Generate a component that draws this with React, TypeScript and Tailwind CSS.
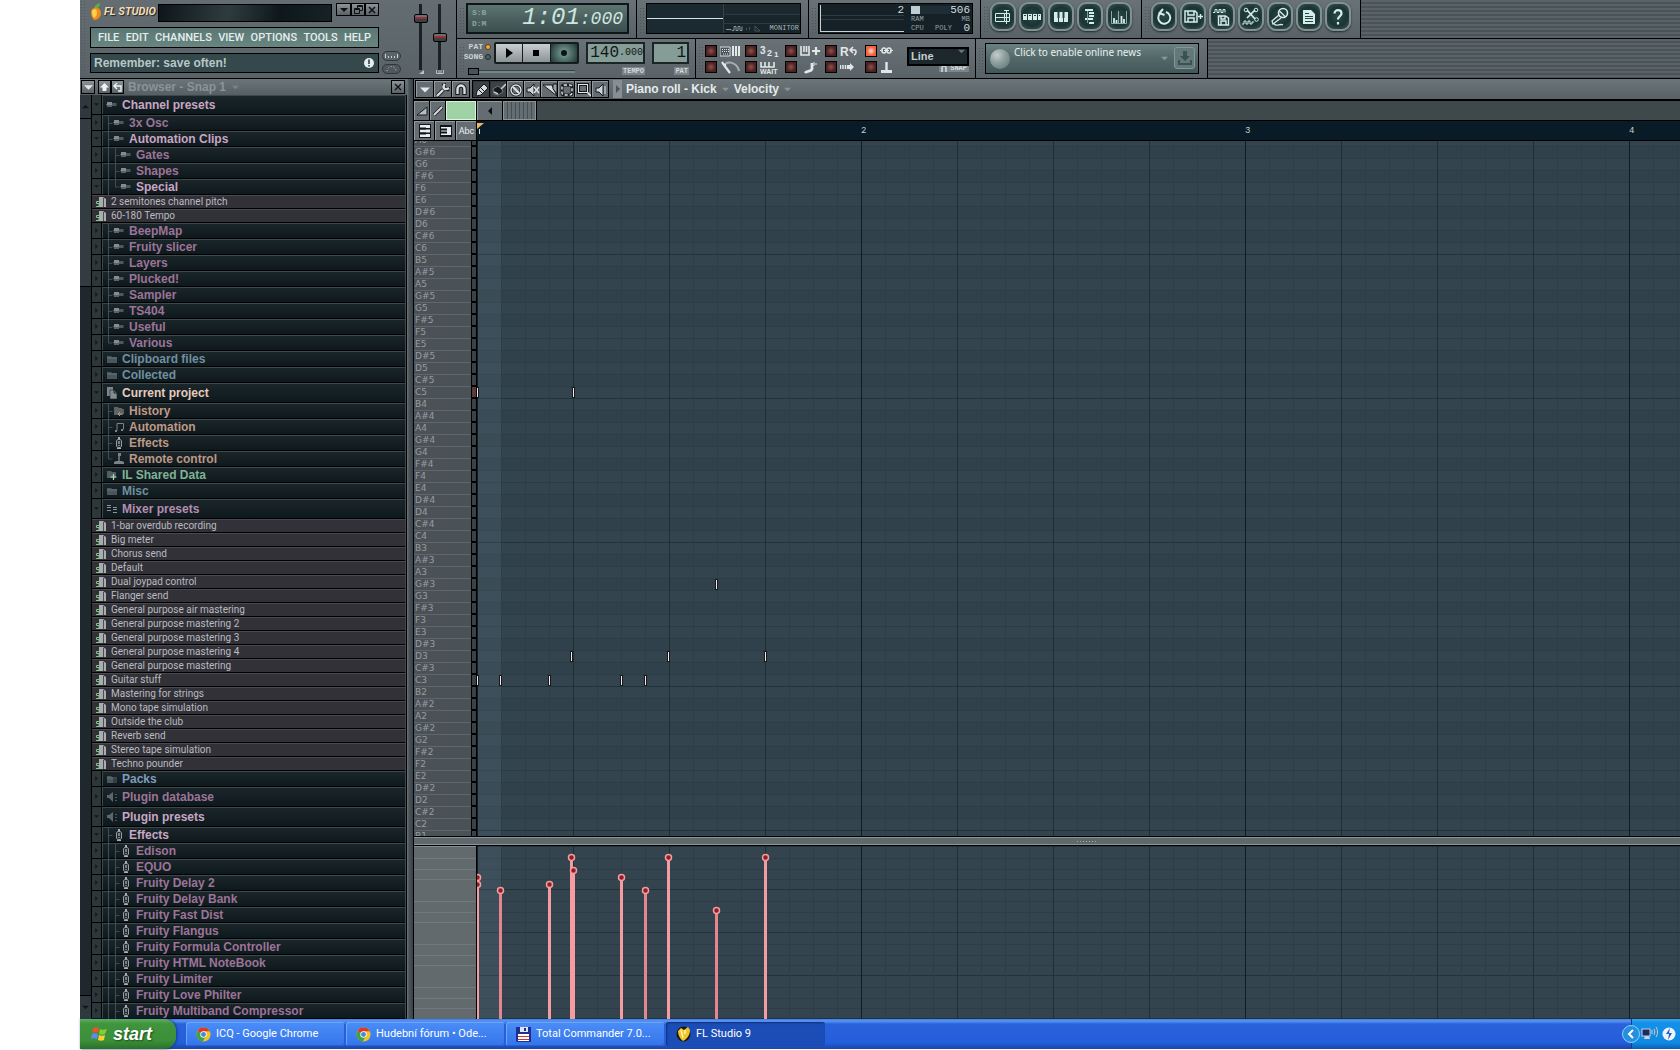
import React from "react";

const SANS = "font-['Liberation_Sans',Arial,sans-serif]";
const NOTO = "font-['Noto_Sans','Open_Sans',sans-serif]";
const ROBOTO = "font-['Roboto','Liberation_Sans',sans-serif]";
const MONO = "font-['Liberation_Mono',monospace]";

/* ---------- browser tree ---------- */
type Kind = "plug" | "folder" | "pages" | "history" | "notes" | "fx" | "joy" | "shared" | "mixer" | "packs" | "db" | "file";
type Row = { t: string; d: number; k: Kind; c: string; open?: boolean; tall?: boolean; last?: boolean };

const MAUVE = "text-[#9c7497]";
const MAUVE_HI = "text-[#c9a6c3]";
const BLUE = "text-[#6f909f]";
const SALMON = "text-[#bf9887]";

const file = (t: string): Row => ({ t, d: 0, k: "file", c: "text-[#b9bcc0]" });
const plug = (t: string, d = 1, last = false): Row => ({ t, d, k: "plug", c: MAUVE, last });
const fx = (t: string): Row => ({ t, d: 2, k: "fx", c: MAUVE });

const ROWS: Row[] = [
  { t: "Channel presets", d: 0, k: "plug", c: MAUVE_HI, open: true, tall: true },
  plug("3x Osc"),
  { t: "Automation Clips", d: 1, k: "plug", c: MAUVE_HI, open: true },
  plug("Gates", 2),
  plug("Shapes", 2),
  { t: "Special", d: 2, k: "plug", c: MAUVE_HI, open: true, last: true },
  file("2 semitones channel pitch"),
  file("60-180 Tempo"),
  plug("BeepMap"),
  plug("Fruity slicer"),
  plug("Layers"),
  plug("Plucked!"),
  plug("Sampler"),
  plug("TS404"),
  plug("Useful"),
  plug("Various", 1, true),
  { t: "Clipboard files", d: 0, k: "folder", c: BLUE },
  { t: "Collected", d: 0, k: "folder", c: BLUE },
  { t: "Current project", d: 0, k: "pages", c: "text-[#e6cbbd]", open: true, tall: true },
  { t: "History", d: 1, k: "history", c: SALMON },
  { t: "Automation", d: 1, k: "notes", c: SALMON },
  { t: "Effects", d: 1, k: "fx", c: SALMON },
  { t: "Remote control", d: 1, k: "joy", c: SALMON, last: true },
  { t: "IL Shared Data", d: 0, k: "shared", c: "text-[#7fb297]" },
  { t: "Misc", d: 0, k: "folder", c: BLUE },
  { t: "Mixer presets", d: 0, k: "mixer", c: "text-[#b58daf]", open: true, tall: true },
  file("1-bar overdub recording"),
  file("Big meter"),
  file("Chorus send"),
  file("Default"),
  file("Dual joypad control"),
  file("Flanger send"),
  file("General purpose air mastering"),
  file("General purpose mastering 2"),
  file("General purpose mastering 3"),
  file("General purpose mastering 4"),
  file("General purpose mastering"),
  file("Guitar stuff"),
  file("Mastering for strings"),
  file("Mono tape simulation"),
  file("Outside the club"),
  file("Reverb send"),
  file("Stereo tape simulation"),
  file("Techno pounder"),
  { t: "Packs", d: 0, k: "packs", c: "text-[#7f9dbb]" },
  { t: "Plugin database", d: 0, k: "db", c: MAUVE, tall: true },
  { t: "Plugin presets", d: 0, k: "db", c: MAUVE_HI, open: true, tall: true },
  { t: "Effects", d: 1, k: "fx", c: MAUVE_HI, open: true },
  fx("Edison"),
  fx("EQUO"),
  fx("Fruity Delay 2"),
  fx("Fruity Delay Bank"),
  fx("Fruity Fast Dist"),
  fx("Fruity Flangus"),
  fx("Fruity Formula Controller"),
  fx("Fruity HTML NoteBook"),
  fx("Fruity Limiter"),
  fx("Fruity Love Philter"),
  fx("Fruity Multiband Compressor"),
];

function TreeIcon({ k }: { k: Kind }) {
  return (
    <svg width="12" height="12" viewBox="0 0 12 12" className="shrink-0" fill="none">
      {k === "plug" && (
        <>
          <rect x="1" y="3" width="5" height="5" fill="#858b8e" />
          <rect x="1" y="6" width="5" height="2" fill="#5c6468" />
          <rect x="6" y="4" width="4" height="3" fill="#4e575b" />
          <rect x="10" y="4" width="1" height="3" fill="#333c40" />
          <rect x="0" y="5" width="1" height="1" fill="#5a6266" />
        </>
      )}
      {(k === "folder" || k === "packs") && (
        <>
          <path d="M1 3h4l1 1h5v6H1z" fill="#4a565c" />
          <path d="M1 5h10" stroke="#66737a" />
          {k === "packs" && <path d="M8 1v9M10 2v8" stroke="#1b262b" />}
        </>
      )}
      {k === "pages" && (
        <>
          <path d="M1 0h6v9H1z" fill="#7d8589" />
          <path d="M4 3h4l3 3v6H4z" fill="#858d91" stroke="#1a2428" strokeWidth=".6" />
          <path d="M8 3v3h3" stroke="#1a2428" />
        </>
      )}
      {k === "history" && (
        <>
          <path d="M1 2h4l1 1h3v7H1z" fill="#5c6468" />
          <path d="M10 4v5H5M7 7L5 9l2 2" stroke="#b09a90" />
        </>
      )}
      {k === "notes" && (
        <>
          <path d="M4 9.500V2.500h6.500v6" stroke="#7b8386" />
          <path d="M2 9h2v2H2zM8 8h2v2H8z" fill="#7b8386" />
        </>
      )}
      {k === "fx" && (
        <>
          <path d="M5 0h2v2H5zM4 11h4v1H4z" fill="#a9aeb0" />
          <path d="M3.500 4l1-1.500h3l1 1.500v5l-1 1.500h-3l-1-1.500z" fill="#222c30" stroke="#979da0" />
          <path d="M6 4v3M6 8v1" stroke="#d0d3d4" />
        </>
      )}
      {k === "joy" && (
        <>
          <path d="M6 1v7" stroke="#7b8386" strokeWidth="1.500" />
          <rect x="5" y="0" width="3" height="3" fill="#7b8386" />
          <path d="M3 8h6l2 1v2H1V9z" fill="#7b8386" />
        </>
      )}
      {k === "shared" && (
        <>
          <path d="M1 2h4l1 1h4v6H1z" fill="#4d6059" />
          <path d="M7.500 5v6M4.500 8h6" stroke="#b7d8c6" strokeWidth="1.200" />
        </>
      )}
      {k === "mixer" && <path d="M1 2.500h4M1 4.500h4M1 7.500h4M7 4.500h4M7 6.500h4M7 9.500h4" stroke="#8d9498" />}
      {k === "db" && (
        <>
          <path d="M7 1L3 4H1v3h2l4 4z" fill="#5d666a" />
          <path d="M10 3v1M10 6v1M10 9v1" stroke="#8d9498" />
        </>
      )}
      {k === "file" && (
        <>
          <path d="M4 1h4l3 2v8H4z" fill="#a9adb0" />
          <path d="M8.500 2v9" stroke="#4b4f54" />
          <path d="M5 5.500H1.500v2H4v3H1" stroke="#7fc48a" />
        </>
      )}
    </svg>
  );
}

function Tri({ dir, c = "#11181b", s = 7 }: { dir: "up" | "down" | "left" | "right"; c?: string; s?: number }) {
  const d = { up: "M0 6L4 2L8 6z", down: "M0 2L4 6L8 2z", left: "M6 0L2 4L6 8z", right: "M2 0L6 4L2 8z" }[dir];
  return (
    <svg width={s} height={s} viewBox="0 0 8 8" className="shrink-0">
      <path d={d} fill={c} />
    </svg>
  );
}

function TreeRow({ r }: { r: Row }) {
  if (r.k === "file")
    return (
      <li className="h-[14px] shrink-0 border-b border-black">
        <button className={`${ROBOTO} ${r.c} flex h-full w-full items-center gap-1 border-t border-[#494950] bg-[#323138] pl-[3px] text-[10px] leading-[12px]`}>
          <TreeIcon k="file" />
          {r.t}
        </button>
      </li>
    );
  return (
    <li className={`flex shrink-0 gap-px border-b border-black ${r.tall ? "h-5" : "h-4"}`}>
      <span className="flex w-[9px] shrink-0 items-center justify-center bg-[#2d3639]">
        <Tri dir={r.open ? "down" : "right"} s={5} />
      </span>
      <button
        className={`${SANS} ${r.c} flex min-w-0 flex-1 items-center border-t border-l border-[#3d484d] bg-linear-to-b from-[#1b262a] to-[#0e191e] pl-[3px] text-left text-[12px] leading-[14px] font-bold whitespace-nowrap`}
      >
        {Array.from({ length: r.d }).map((_, i) => (
          <svg key={i} width="7" height="16" viewBox="0 0 7 16" className="shrink-0" fill="none" stroke="#424d52">
            <path d={i === r.d - 1 ? (r.last ? "M2.500 0v8h4" : "M2.500 0v16M2.500 8.500h4") : "M2.500 0v16"} />
          </svg>
        ))}
        <TreeIcon k={r.k} />
        <span className="pl-1">{r.t}</span>
      </button>
    </li>
  );
}

const METAL_BTN = "flex items-center justify-center border border-black bg-linear-to-b from-[#8b9498] to-[#596367]";

function Browser() {
  return (
    <section className="flex w-[327px] shrink-0 flex-col bg-black">
      <header className="flex h-4 shrink-0 items-center gap-[2px] bg-linear-to-b from-[#6c7679] to-[#566064] pl-[1px] pr-[2px]">
        <button aria-label="Browser menu" className={`${METAL_BTN} h-[14px] w-[14px]`}><Tri dir="down" c="#e4e8ea" s={9} /></button>
        <div className="flex pl-[1px]">
          <button aria-label="Up" className={`${METAL_BTN} h-[14px] w-[13px]`}>
            <svg width="9" height="9" viewBox="0 0 9 9"><path d="M4.500 0L9 4.500H6.500V8h-4V4.500H0z" fill="#f0f3f4" /></svg>
          </button>
          <button aria-label="Back" className={`${METAL_BTN} h-[14px] w-[13px]`}>
            <svg width="10" height="9" viewBox="0 0 10 9" fill="none" stroke="#f0f3f4" strokeWidth="1.400"><path d="M4 0L1 3l3 3M1 3h7v5H5" /></svg>
          </button>
        </div>
        <h2 className={`${SANS} pl-[2px] text-[12px] leading-4 font-bold text-[#8b9498]`}>Browser - Snap 1</h2>
        <span className="pl-1"><Tri dir="down" c="#7b8589" /></span>
        <button aria-label="Close browser" className={`${METAL_BTN} ml-auto h-[14px] w-[14px]`}>
          <svg width="8" height="8" viewBox="0 0 8 8" stroke="#111" strokeWidth="1.300"><path d="M1 1l6 6M7 1L1 7" /></svg>
        </button>
      </header>
      <div className="flex min-h-0 flex-1">
        <div className="flex w-[12px] shrink-0 flex-col border-r border-black bg-[#1f282c]">
          <span className="flex h-6 items-center justify-center border-b border-black bg-[#2f393d]"><Tri dir="up" /></span>
          <span className="h-[168px] border-b border-black bg-[#333d41]" />
          <span className="mt-auto flex h-6 items-center justify-center border-t border-black bg-[#2f393d]"><Tri dir="down" /></span>
        </div>
        <ul className="flex min-w-0 flex-1 flex-col overflow-hidden border-r border-[#3d484d]">
          {ROWS.map((r, i) => <TreeRow key={i} r={r} />)}
        </ul>
        <span className="w-px bg-black" />
      </div>
    </section>
  );
}

/* ---------- toolbar ---------- */
const PANEL = "flex shrink-0 border-r border-b border-black bg-linear-to-b from-[#697377] to-[#596367]";

function Grip() {
  return <span className="my-1 w-[7px] shrink-0 bg-[radial-gradient(circle,#4b5559_1px,transparent_1px)] bg-[size:3px_3px]" />;
}

const FADER =
  "appearance-none bg-[linear-gradient(90deg,transparent_5px,#1a2023_5px,#1a2023_8px,transparent_8px)] [&::-webkit-slider-thumb]:appearance-none [&::-webkit-slider-thumb]:h-[9px] [&::-webkit-slider-thumb]:w-[14px] [&::-webkit-slider-thumb]:rounded-[2px] [&::-webkit-slider-thumb]:border [&::-webkit-slider-thumb]:border-black [&::-webkit-slider-thumb]:bg-[linear-gradient(180deg,#6a7073_2px,#a8323b_2px,#8d2a32_4px,#3a3f42_4px)]";

function MainPanel() {
  const menu = ["FILE", "EDIT", "CHANNELS", "VIEW", "OPTIONS", "TOOLS", "HELP"];
  return (
    <div className="flex w-[377px] shrink-0 border-r border-b border-black bg-linear-to-b from-[#646e72] to-[#596367]">
      <span className="w-[7px] shrink-0 bg-[radial-gradient(circle,#50595e_1px,transparent_1px)] bg-[size:3px_3px]" />
      <div className="flex w-[292px] flex-col gap-[5px] pt-[3px] pl-[3px]">
        <div className="flex h-[19px] items-start">
          <div className="flex h-[18px] w-[68px] items-center gap-[2px]">
            <svg width="12" height="18" viewBox="0 0 12 18" className="shrink-0">
              <path d="M4 6C4 3 6 1 10 0C10 3 9 5 6 6z" fill="#5fae3b" />
              <path d="M1 9C1 6 4 4 7 5C10 5 11 8 11 11C10 15 7 17 4 17C2 15 1 12 1 9z" fill="#f08a1c" />
              <path d="M2 8C4 5 7 6 7 9C7 12 6 14 4 15C2 13 2 10 2 8z" fill="#ffd24a" />
            </svg>
            <h1 className={`${ROBOTO} text-[11px] leading-4 font-bold whitespace-nowrap text-[#f3ddb8] italic [text-shadow:1px_1px_1px_#1c2225]`}>FL STUDIO</h1>
          </div>
          <div className="mt-px h-[18px] flex-1 border border-black bg-[linear-gradient(100deg,#0d1618,#2f3c3e_40%,#0e181b_70%,#162224)]" />
          <div className="ml-1 flex">
            <button aria-label="Minimize" className={`${METAL_BTN} h-[13px] w-[15px]`}><Tri dir="down" c="#101010" s={8} /></button>
            <button aria-label="Restore" className={`${METAL_BTN} h-[13px] w-[14px]`}>
              <svg width="9" height="9" viewBox="0 0 9 9" fill="none" stroke="#101010"><path d="M3.500 3V.5h5v5H6M3.500 1.500h5" /><path d="M.5 3.500h5v5h-5zM.5 4.500h5" /></svg>
            </button>
            <button aria-label="Close" className={`${METAL_BTN} h-[13px] w-[14px]`}>
              <svg width="8" height="8" viewBox="0 0 8 8" stroke="#101010" strokeWidth="1.500"><path d="M1 1l6 6M7 1L1 7" /></svg>
            </button>
          </div>
        </div>
        <nav className={`${ROBOTO} flex h-[21px] items-center justify-between border border-black bg-linear-to-b from-[#5b7875] to-[#698582] px-[7px] text-[11px] leading-[18px] font-medium text-[#e3eeec]`}>
          {menu.map((m) => <button key={m}>{m}</button>)}
        </nav>
        <div className="flex h-[20px] items-center justify-between border border-black bg-[#35484b] pr-1 pl-[3px]">
          <span className={`${SANS} text-[12px] leading-4 font-bold text-[#b8c7c7]`}>Remember: save often!</span>
          <svg width="10" height="10" viewBox="0 0 10 10"><circle cx="5" cy="5" r="5" fill="#e8eeee" /><path d="M5 1.500v4.500M5 7v1.500" stroke="#253436" strokeWidth="1.500" /></svg>
        </div>
      </div>
      <div className="flex w-[22px] flex-col justify-end gap-[3px] pb-1 pl-[3px]">
        <button aria-label="Ruler" className="h-[10px] w-[19px] rounded-full border border-[#2f383c] bg-[#5a6468]">
          <svg width="17" height="8" viewBox="0 0 17 8" stroke="#c9d0d2"><path d="M2.500 2v4M5.500 4v2M8.500 4v2M11.500 4v2M14.500 2v4" /></svg>
        </button>
        <button aria-label="Knob" className="h-[10px] w-[19px] rounded-full border border-[#2f383c] bg-[#4f595d]">
          <svg width="17" height="8" viewBox="0 0 17 8" fill="none" stroke="#c9d0d2" strokeDasharray="1 2"><path d="M4 6a4.500 4.500 0 0 1 9 0" /></svg>
        </button>
      </div>
      <div className="flex flex-1 gap-[5px] pt-1 pl-[13px]">
        <div className="flex w-[14px] flex-col items-center">
          <input aria-label="Main volume" type="range" defaultValue={82} className={`${FADER} h-[66px] w-[14px] [direction:rtl] [writing-mode:vertical-lr]`} />
          <svg width="5" height="4" viewBox="0 0 5 4"><path d="M5 0v4H0z" fill="#b9c0c2" /></svg>
        </div>
        <div className="flex w-[14px] flex-col items-center">
          <input aria-label="Main pitch" type="range" defaultValue={50} className={`${FADER} h-[66px] w-[14px] [direction:rtl] [writing-mode:vertical-lr]`} />
          <svg width="8" height="4" viewBox="0 0 8 4"><path d="M.5 0v3.500h7V0M3 0v3M5 0v3" stroke="#b9c0c2" fill="none" /></svg>
        </div>
      </div>
    </div>
  );
}

const TINY = `${MONO} text-[8px] leading-[8px] font-bold`;

function TimeDisplay() {
  return (
    <div className={`${PANEL} w-[180px] pt-[3px] pl-[2px]`}>
      <Grip />
      <div className="flex h-[31px] w-[163px] items-center justify-between border-2 border-[#0e1618] bg-linear-to-b from-[#5e7672] via-[#4a605e] to-[#3b504f] pr-1 pl-1">
        <div className={`${TINY} flex flex-col gap-[3px] text-[#8da39f]`}><span>S:B</span><span>D:M</span></div>
        <div className={`${MONO} flex items-baseline text-[#cfe6e0] italic`}>
          <span className="text-[24px] leading-[26px]">1:01</span>
          <span className="text-[18px] leading-[26px]">:000</span>
        </div>
      </div>
    </div>
  );
}

function Scope() {
  return (
    <div className={`${PANEL} w-[172px] pt-[3px] pl-[2px]`}>
      <Grip />
      <div className="flex h-[31px] w-[155px] border border-black bg-[#18252b]">
        <svg width="76" height="29" viewBox="0 0 76 29" className="shrink-0">
          <rect width="76" height="29" fill="#1b2a30" />
          <path d="M0 14.500h76" stroke="#d6e4e6" />
        </svg>
        <div className="flex flex-1 flex-col border-l border-[#33434a]">
          <span className="h-[10px] bg-[#1c2a30]" />
          <span className="h-[9px] border-t border-[#2c3b42]" />
          <div className="flex h-[9px] items-center justify-between border-t border-[#2c3b42]">
            <svg width="44" height="8" viewBox="0 0 44 8" fill="none"><path d="M2 5.500h5l1 1h2v-4h2v4h2v-4h2v4h2v-4" stroke="#84959b" /><path d="M22.500 6V4M25.500 6V3M31 2l5 5h-5z" stroke="#44545a" /></svg>
            <span className={`${MONO} pr-px text-[7px] leading-[8px] text-[#a9b7bb]`}>MONITOR</span>
          </div>
        </div>
      </div>
    </div>
  );
}

function CpuPanel() {
  return (
    <div className={`${PANEL} w-[172px] pt-[3px] pl-[2px]`}>
      <Grip />
      <div className="flex h-[31px] w-[155px] border border-black bg-[#152127] text-[#cfdcdf]">
        <div className="m-px flex w-[84px] flex-col justify-between border-b border-l border-[#c6d2d5]">
          <div className="flex h-[11px] items-center justify-end border-b border-[#2d3c43]"><span className={`${MONO} text-[11px] leading-[10px]`}>2</span></div>
          <span className="h-[12px] border-t border-[#2d3c43]" />
        </div>
        <div className="flex flex-1 flex-col pr-[2px] pl-[6px]">
          <div className="flex h-[11px] items-center justify-between">
            <span className="h-[8px] w-[9px] bg-[#bcd0d4]" />
            <span className="h-[8px] flex-1 bg-[#1f2d34]" />
            <span className={`${MONO} text-[11px] leading-[10px]`}>506</span>
          </div>
          <div className={`${MONO} flex h-[8px] items-center justify-between text-[7px] leading-[8px] text-[#94a3a8]`}><span>RAM</span><span>MB</span></div>
          <div className={`${MONO} flex h-[10px] items-center justify-between text-[7px] leading-[8px] text-[#94a3a8]`}>
            <span>CPU</span><span>POLY</span><span className="text-[11px] leading-[10px] text-[#cfdcdf]">0</span>
          </div>
        </div>
      </div>
    </div>
  );
}

const BIG_ICONS: Record<string, React.ReactNode> = {
  Playlist: <path d="M2.500 6.500h9v8h-9zM2.500 10.500h14v4h-5M11.500 6.500h5v4M13.500 3v14M11 3.500h5" />,
  "Step sequencer": <><path d="M1 7h4v6H1zM6 7h4v6H6zM11 7h4v6h-4zM16 7h3v6h-3z" fill="#d5ece8" stroke="none" /><path d="M2 8.500h2M7 8.500h2M12 8.500h2M17 8.500h1" stroke="#274440" /></>,
  "Piano roll": <><path d="M3 5h14v10H3z" fill="#d5ece8" stroke="none" /><path d="M7.500 15v-4M12.500 15v-4" stroke="#274440" /><path d="M7.500 5v6M12.500 5v6" stroke="#274440" strokeWidth="2" /></>,
  Browser: <><path d="M5 3h8M9 6h5M9 9h5M5 12h8M9 16h5" strokeWidth="1.800" /><path d="M7.500 4v12" stroke="#7f9b97" /></>,
  Mixer: <><path d="M2.500 4v12.500h15V4M9.500 4v12" stroke="#8fa9a5" /><path d="M5 16v-5M7.500 16v-3M12.500 16v-7M15 16v-4" strokeWidth="1.800" /></>,
  Undo: <path d="M6 6.500a6 6 0 1 0 6-1.500M9 2L5.500 6l5 2" strokeWidth="2" />,
  "Save new version": <><path d="M2 4h10l2 2v9H2zM5 4v4h6V4M5 15v-4h6v4" strokeWidth="1.500" /><path d="M15 9.500h5M17.500 7v5" strokeWidth="1.400" /></>,
  "Export wave": <><path d="M1 5.500h2v-3h2v3h2v-3h2v3h2v-3h2v3" /><path d="M6.500 9h7l3 2v7h-10zM9 9v3h4V9M9 18v-4h5v4" strokeWidth="1.400" /></>,
  "Edit audio": <><path d="M6 3l8 9M14 3L6 11" strokeWidth="1.700" /><circle cx="15.500" cy="12.500" r="1.800" /><circle cx="5" cy="3" r="1.800" /><circle cx="15" cy="3" r="1.800" /><path d="M1 17h2v-3h2v3h2v-3h2v3h2v-2h2" /></>,
  "Record audio": <><circle cx="13" cy="6" r="4.500" strokeWidth="1.600" /><path d="M9 8L2 14l1 3 8-6M4 17c3 3 6-1 9 1M9.500 4l6 6" strokeWidth="1.300" /></>,
  "Project info": <><path d="M4 3h8l4 4v10H4z" fill="#d5ece8" stroke="none" /><path d="M6 6.500h4M6 9.500h8M6 11.500h8M6 14.500h8" stroke="#274440" /></>,
  Help: <path d="M6.500 6.500c0-4.500 7-4.500 7 0 0 2.500-3.500 3-3.500 6M10 15v2.500" strokeWidth="2.200" />,
};

function BigButtons({ names, w }: { names: string[]; w: string }) {
  return (
    <div className={`${PANEL} ${w} pt-[2px] pl-[2px]`}>
      <Grip />
      <div className="flex gap-[3px]">
        {names.map((n) => (
          <button key={n} aria-label={n} className="flex h-[29px] w-[26px] items-center justify-center rounded-[9px] border-2 border-[#80918f] bg-[radial-gradient(circle,#2b4a47,#1a3433_55%,#3e5c59)] shadow-[0_1px_2px_#20282b]">
            <svg width="20" height="20" viewBox="0 0 20 20" fill="none" stroke="#d5ece8" className="shrink-0">{BIG_ICONS[n]}</svg>
          </button>
        ))}
      </div>
    </div>
  );
}

function Transport() {
  const lcd = `${MONO} flex h-[22px] items-center justify-end border-2 border-[#1b2426] bg-[#869c96] text-[#0d1816]`;
  const tag = `${MONO} mt-[3px] self-end bg-[#7a8589] px-px text-[7px] leading-[8px] font-bold text-[#d4dadc]`;
  return (
    <div className={`${PANEL} w-[239px] pt-[3px] pl-[2px]`}>
      <Grip />
      <div className="flex w-[113px] flex-col">
        <div className="flex h-[22px]">
          <div className={`${TINY} flex w-[28px] flex-col items-end gap-[2px] pt-[1px] pr-[3px] text-[#cdd4d6]`}>
            <span className="flex items-center gap-[2px]">PAT<i className="h-[6px] w-[6px] rounded-full border border-[#5c3a10] bg-[#f3a64a]" /></span>
            <span className="flex items-center gap-[2px]">SONG<i className="h-[6px] w-[6px] rounded-full border border-[#1e2a2c] bg-[#4d6163]" /></span>
          </div>
          <div className="flex flex-1 rounded-[2px] border-2 border-[#151c1e]">
            <button aria-label="Play" className="flex flex-1 items-center justify-center border-r border-[#151c1e] bg-linear-to-b from-[#c9ced0] to-[#8b9396]">
              <svg width="9" height="10" viewBox="0 0 9 10"><path d="M1 0l7 5-7 5z" /></svg>
            </button>
            <button aria-label="Stop" className="flex flex-1 items-center justify-center border-r border-[#151c1e] bg-linear-to-b from-[#c9ced0] to-[#8b9396]">
              <span className="h-[6px] w-[6px] bg-black" />
            </button>
            <button aria-label="Record" className="flex flex-1 items-center justify-center bg-[radial-gradient(circle,#7fa39b,#1f3532)]">
              <span className="h-[6px] w-[6px] rounded-full bg-[#0b1514]" />
            </button>
          </div>
        </div>
        <input aria-label="Song position" type="range" defaultValue={0} className="mt-1 ml-[2px] h-[7px] w-[107px] appearance-none bg-[linear-gradient(180deg,transparent_2px,#16201f_2px,#8fa8a3_4px,transparent_5px)] [&::-webkit-slider-thumb]:h-[7px] [&::-webkit-slider-thumb]:w-[11px] [&::-webkit-slider-thumb]:appearance-none [&::-webkit-slider-thumb]:border [&::-webkit-slider-thumb]:border-black [&::-webkit-slider-thumb]:bg-[#4a5357]" />
      </div>
      <div className="ml-[7px] flex w-[59px] flex-col">
        <div className={lcd}><span className="text-[16px] leading-[18px]">140</span><span className="text-[10px] leading-[18px]">.000</span></div>
        <span className={tag}>TEMPO</span>
      </div>
      <div className="ml-[7px] flex w-[37px] flex-col">
        <div className={`${lcd} pr-px`}><span className="text-[16px] leading-[18px]">1</span></div>
        <span className={tag}>PAT</span>
      </div>
    </div>
  );
}

const GLYPH = { fontFamily: "Liberation Sans", fontWeight: 700, fill: "#e3e7e8", stroke: "none" };

const REC: { n: string; on?: boolean; i: React.ReactNode }[] = [
  { n: "Typing keyboard to piano", i: <><path d="M0 1h10v9H0z" fill="#4b5458" stroke="#d8dddf" /><path d="M2 3.500h7M2 5.500h7M3 8h5" strokeDasharray="1 1" /><path d="M12 0h2v10h-2zM15 0h2v10h-2zM18 0h2v10h-2z" fill="#e3e7e8" stroke="none" /></> },
  { n: "Countdown", i: <><text x="0" y="8" fontSize="10" {...GLYPH}>3</text><text x="7" y="10" fontSize="9" {...GLYPH}>2</text><text x="14" y="11" fontSize="8" {...GLYPH}>1</text></> },
  { n: "Blend notes", i: <><path d="M1 0v9h8V0M4 0v6M6.500 0v6" strokeWidth="1.600" /><path d="M12 5h8M16 1v8" strokeWidth="2.200" /></> },
  { n: "Loop record", i: <><text x="0" y="10" fontSize="12" {...GLYPH}>R</text><path d="M13 1L10 4l3 3M11 4h4c2 1 1 4-1 5" strokeWidth="1.600" /></> },
  { n: "Link", on: true, i: <><rect x="2" y="2" width="4" height="5" rx="2" strokeWidth="1.500" /><rect x="7" y="2" width="4" height="5" rx="2" strokeWidth="1.500" /><path d="M0 4.500h3M4 4.500h5M10 4.500h3" /></> },
  { n: "Tools", i: <><path d="M2 0l2 3 2-1M4 3l6 8" strokeWidth="2.200" /><path d="M6 1c6-2 12 2 13 8" stroke="#a7afb2" strokeWidth="2" /></> },
  { n: "Wait for input", i: <><path d="M1 0v5h13V0M5 0v5M9 0v5" strokeWidth="1.600" /><text x="0" y="12" fontSize="7" {...GLYPH}>WAIT</text></> },
  { n: "Step edit", i: <><path d="M12 1v6c-1 3-5 1-7 4" strokeWidth="2.800" /><path d="M14 0v4M16 1v2" /></> },
  { n: "Auto scroll", i: <><path d="M.5 3v4M3 3v4M5.500 3v4" strokeWidth="1.500" /><path d="M7 3h3V1l4 4-4 4V7H7z" fill="#e3e7e8" stroke="none" /></> },
  { n: "Controller", i: <><path d="M6.500 0v8" strokeWidth="2.400" /><path d="M1 8h11v3H1z" fill="#e3e7e8" stroke="none" /></> },
];

function RecordPanel() {
  return (
    <div className={`${PANEL} w-[280px] pt-[3px] pl-[2px]`}>
      <Grip />
      <div className="grid h-[32px] w-[200px] grid-cols-5 grid-rows-2 gap-y-[2px] pt-[2px]">
        {REC.map((r) => (
          <button key={r.n} aria-label={r.n} className="flex items-center gap-[3px]">
            <span className={`h-[12px] w-[12px] shrink-0 border border-black ${r.on ? "bg-[radial-gradient(circle,#ffd9c8,#f0603f_60%)]" : "bg-[radial-gradient(circle,#8a5450,#4b201f_65%)]"}`} />
            <svg width="21" height="13" viewBox="0 -1 21 13" fill="none" stroke="#e3e7e8">{r.i}</svg>
          </button>
        ))}
      </div>
      <div className="flex flex-1 flex-col items-end pr-[6px]">
        <div className="relative h-[19px] w-[62px]">
          <select aria-label="Snap" className={`${SANS} h-full w-full appearance-none border-2 border-black bg-[#1d282c] pl-[2px] text-[11px] leading-[14px] font-bold text-[#c6cdcf]`}><option>Line</option></select>
          <span className="pointer-events-none absolute top-[6px] right-[4px]"><Tri dir="down" c="#66737a" /></span>
        </div>
        <span className={`${MONO} mt-[3px] flex items-center gap-[3px] bg-[#7a8589] px-[2px] text-[7px] leading-[8px] font-bold text-[#d4dadc]`}>
          <svg width="6" height="7" viewBox="0 0 6 7" fill="none" stroke="#d4dadc" strokeWidth="1.500"><path d="M1 7V3a2 2 0 0 1 4 0v4" /></svg>SNAP
        </span>
      </div>
    </div>
  );
}

function News() {
  return (
    <div className={`${PANEL} w-[232px] pt-1 pl-[2px]`}>
      <Grip />
      <div className="flex h-[31px] w-[214px] items-start border border-black bg-linear-to-b from-[#6b8080] via-[#526868] to-[#42595a] py-[3px] pr-[3px] pl-1">
        <span className="mt-[2px] h-[20px] w-[20px] shrink-0 rounded-full bg-[radial-gradient(circle_at_35%_30%,#c3cdcb,#8b9c9b_45%,#5c7071)]" />
        <button className={`${NOTO} pl-1 text-[10px] leading-[10px] whitespace-nowrap text-[#e8eeee]`}>Click to enable online news</button>
        <span className="mt-2 ml-auto"><Tri dir="down" c="#85999a" /></span>
        <button aria-label="Download news" className="ml-[6px] flex h-[22px] w-[21px] items-center justify-center rounded-[3px] border border-[#82979a] bg-[#627879]">
          <svg width="14" height="14" viewBox="0 0 14 14"><path d="M5 0h4v5h3L7 10 2 5h3zM0 9h2v3h10V9h2v5H0z" fill="#3c5152" /></svg>
        </button>
      </div>
    </div>
  );
}

const RIDGES = "flex-1 border-b border-black bg-[repeating-linear-gradient(180deg,#5a6468_0px,#5a6468_2px,#4a5458_2px,#4a5458_4px)]";

function Toolbar() {
  return (
    <div className="flex h-[79px] shrink-0 bg-[#5b6569]">
      <MainPanel />
      <div className="flex min-w-0 flex-1 flex-col overflow-hidden">
        <div className="flex h-[39px]">
          <TimeDisplay />
          <Scope />
          <CpuPanel />
          <BigButtons names={["Playlist", "Step sequencer", "Piano roll", "Browser", "Mixer"]} w="w-[161px]" />
          <BigButtons names={["Undo", "Save new version", "Export wave", "Edit audio", "Record audio", "Project info", "Help"]} w="w-[219px]" />
          <div className={RIDGES} />
        </div>
        <div className="flex h-[40px]">
          <Transport />
          <RecordPanel />
          <News />
          <div className={RIDGES} />
        </div>
      </div>
    </div>
  );
}

/* ---------- piano roll ---------- */
const NAMES = ["B", "A#", "A", "G#", "G", "F#", "F", "E", "D#", "D", "C#", "C"];
const KEYS: string[] = [];
for (let o = 6; o >= 1; o--) for (const n of NAMES) KEYS.push(n + o);
const SHOWN = KEYS.slice(2, KEYS.indexOf("B1") + 1);

const NOTES: { x: number; k: string }[] = [
  { x: 0, k: "C5" }, { x: 96, k: "C5" }, { x: 239, k: "G#3" },
  { x: 94, k: "D3" }, { x: 191, k: "D3" }, { x: 288, k: "D3" },
  { x: 0, k: "C3" }, { x: 23, k: "C3" }, { x: 72, k: "C3" }, { x: 144, k: "C3" }, { x: 168, k: "C3" },
];

const VELS: { x: number; y: number; dim?: boolean }[] = [
  { x: 0, y: 31 }, { x: 0, y: 38 }, { x: 23, y: 44, dim: true }, { x: 72, y: 38 }, { x: 94, y: 11 }, { x: 96, y: 24 },
  { x: 144, y: 31 }, { x: 168, y: 44, dim: true }, { x: 191, y: 11 }, { x: 239, y: 64, dim: true }, { x: 288, y: 11 },
];

function BarLines({ id }: { id: string }) {
  return (
    <>
      <defs>
        <pattern id={id} width="384" height="8" patternUnits="userSpaceOnUse">
          {Array.from({ length: 16 }).map((_, i) => (
            <rect key={i} x={i * 24} y="0" width="1" height="8" fill={i === 0 ? "#101d25" : i % 4 === 0 ? "#1f2e37" : "#2e3e48"} />
          ))}
        </pattern>
      </defs>
      <rect width="24" height="100%" fill="#7f98a6" opacity=".14" />
      <rect width="100%" height="100%" fill={`url(#${id})`} />
    </>
  );
}

function NoteGrid() {
  return (
    <svg width="100%" height="100%" className="block" shapeRendering="crispEdges">
      <rect width="100%" height="100%" fill="#33444e" />
      {SHOWN.map((k, i) => {
        const y = -6 + i * 12;
        return (
          <g key={k}>
            {k.includes("#") && <rect y={y} width="100%" height="12" fill="#31414b" />}
            <rect y={y + 11} width="100%" height="1" fill={k.startsWith("C") && !k.includes("#") ? "#22323b" : "#2c3c46"} />
          </g>
        );
      })}
      <BarLines id="rollBars" />
      {NOTES.map((n, i) => (
        <g key={i}>
          <rect x={n.x - 1} y={-6 + SHOWN.indexOf(n.k) * 12} width="3" height="11" fill="#14191c" />
          <rect x={n.x} y={-5 + SHOWN.indexOf(n.k) * 12} width="1" height="9" fill="#f4e6e6" />
        </g>
      ))}
    </svg>
  );
}

function VelocityGrid() {
  return (
    <svg width="100%" height="100%" className="block" shapeRendering="crispEdges">
      <defs>
        <pattern id="velRows" y="1" width="8" height="43" patternUnits="userSpaceOnUse">
          <rect y="11" width="8" height="1" fill="#2d3d47" />
          <rect y="22" width="8" height="1" fill="#2d3d47" />
          <rect y="32" width="8" height="1" fill="#2d3d47" />
          <rect y="42" width="8" height="1" fill="#22323b" />
        </pattern>
      </defs>
      <rect width="100%" height="100%" fill="#33444e" />
      <rect width="100%" height="100%" fill="url(#velRows)" />
      <BarLines id="velBars" />
      {VELS.map((v, i) => (
        <g key={i}>
          <rect x={v.x - 1} y={v.y + 3} width="3" height="100%" fill={v.dim ? "#e4868b" : "#f59ca1"} />
          <circle cx={v.x + 0.5} cy={v.y + 0.5} r="3" fill="#8e1f25" stroke="#f59ca1" strokeWidth="1.500" shapeRendering="auto" />
        </g>
      ))}
    </svg>
  );
}

const TOOLS: { n: string; i: React.ReactNode; on?: boolean }[] = [
  { n: "Draw", on: true, i: <><path d="M1 13l1-5 7-7 4 4-7 7z" fill="#d5dadc" stroke="#15191b" /><path d="M4 7l4 4M6 5l4 4" stroke="#15191b" /></> },
  { n: "Paint", on: true, i: <><path d="M1 6l5-3 4 3 1 3-5 3-4-1z" fill="#15191b" stroke="#8b9498" strokeWidth=".7" /><path d="M9 6l5-5M2 9l4 2" stroke="#c5cbcd" strokeWidth="1.600" /></> },
  { n: "Delete", i: <><circle cx="7" cy="7" r="5" strokeWidth="3" stroke="#15191b" /><circle cx="7" cy="7" r="5" strokeWidth="1.400" stroke="#e1e5e6" /><path d="M4 4l6 6" strokeWidth="1.800" stroke="#e1e5e6" /></> },
  { n: "Mute", i: <><path d="M1 5h3l4-4v12L4 9H1z" fill="#cfd5d7" stroke="#15191b" /><path d="M8 4l5 6M13 4l-5 6" stroke="#e1e5e6" strokeWidth="1.400" /></> },
  { n: "Slice", i: <><path d="M0 2h9l5 11z" fill="#d5dadc" stroke="#15191b" /><path d="M10 1v5l4 5V1z" fill="#9aa3a6" stroke="#15191b" /></> },
  { n: "Select", i: <><rect x="2" y="2" width="10" height="10" rx="2" stroke="#15191b" strokeWidth="3" /><rect x="2" y="2" width="10" height="10" rx="2" stroke="#e1e5e6" strokeWidth="1.400" strokeDasharray="3 2" /></> },
  { n: "Zoom", i: <><rect x="1.500" y="1.500" width="9" height="8" stroke="#15191b" strokeWidth="3" /><rect x="1.500" y="1.500" width="9" height="8" stroke="#e1e5e6" /><path d="M10 9l4 4" stroke="#e1e5e6" strokeWidth="1.600" /></> },
  { n: "Playback", i: <><path d="M2 5h3l4-4v12L5 9H2z" fill="#cfd5d7" stroke="#15191b" /><path d="M11 3v8" stroke="#e1e5e6" /></> },
];

function PianoRoll() {
  const tb = "flex h-full items-center justify-center border-t border-l border-[#929b9f] bg-[#646e72]";
  return (
    <section className="flex min-w-0 flex-1 flex-col bg-black pl-px">
      <header className="flex h-[20px] shrink-0 items-center bg-linear-to-b from-[#6c7679] to-[#586266] pl-px">
        <div className="flex h-[18px] gap-px border border-black bg-black">
          <button aria-label="Piano roll menu" className={`${tb} w-[17px]`}><Tri dir="down" c="#e4e8ea" s={10} /></button>
          <button aria-label="Piano roll tools" className={`${tb} w-[17px]`}>
            <svg width="14" height="14" viewBox="0 0 14 14" fill="none"><path d="M1 13l6-6M8 1c-1 4 1 6 5 5M8 1h2M13 6V4" stroke="#15191b" strokeWidth="4" /><path d="M1 13l6-6" stroke="#d8dddf" strokeWidth="2.400" /><path d="M9 1c-3 3-1 7 4 4" stroke="#d8dddf" strokeWidth="2.400" /></svg>
          </button>
          <button aria-label="Snap" className={`${tb} w-[17px]`}>
            <svg width="12" height="13" viewBox="0 0 12 13" fill="none"><path d="M2.500 12V6a3.500 3.500 0 0 1 7 0v6" stroke="#15191b" strokeWidth="4.400" /><path d="M2.500 11V6a3.500 3.500 0 0 1 7 0v5" stroke="#d8dddf" strokeWidth="2.400" /></svg>
          </button>
        </div>
        <div className="ml-[2px] flex h-[18px] gap-px border border-black bg-black">
          {TOOLS.map((t) => (
            <button key={t.n} aria-label={t.n} className={`flex h-full w-[16px] items-center justify-center border-t border-l ${t.on ? "border-[#2f373a] bg-[#3a4246]" : "border-[#929b9f] bg-[#646e72]"}`}>
              <svg width="14" height="14" viewBox="0 0 14 14" fill="none">{t.i}</svg>
            </button>
          ))}
        </div>
        <span className="ml-1 flex h-[18px] w-[9px] items-center justify-center bg-[#869094]"><Tri dir="right" c="#4b5559" s={8} /></span>
        <h2 className={`${SANS} flex items-center pl-1 text-[12px] leading-4 font-bold text-[#e6eaeb]`}>
          Piano roll - Kick
          <span className="px-[5px]"><Tri dir="down" c="#8a9498" /></span>
          Velocity
          <span className="pl-[5px]"><Tri dir="down" c="#8a9498" /></span>
        </h2>
      </header>
      <div className="mt-px flex h-[20px] shrink-0 gap-px border-t border-black bg-black">
        <button aria-label="Ramp" className={`${tb} w-[15px]`}><svg width="12" height="12" viewBox="0 0 12 12"><path d="M11 2v8H1z" fill="#b4bcbf" stroke="#15191b" /></svg></button>
        <button aria-label="Line" className={`${tb} w-[15px]`}><svg width="12" height="12" viewBox="0 0 12 12"><path d="M2 10l8-8" stroke="#15191b" strokeWidth="3.600" /><path d="M2 10l8-8" stroke="#d8dddf" strokeWidth="2" /></svg></button>
        <button aria-label="Note colour" className="w-[30px] border border-[#dcf3df] bg-[#9fd3a6]" />
        <button aria-label="Scroll left" className={`${tb} w-[25px]`}><Tri dir="left" c="#0b0f11" s={8} /></button>
        <span className="w-[33px] border border-[#8a9498] bg-[repeating-linear-gradient(90deg,#646e72_0px,#646e72_3px,#454e52_3px,#454e52_4px)]" />
        <span className="flex-1 bg-[#3f484b]" />
      </div>
      <div className="flex h-[21px] shrink-0 gap-px border-y border-black bg-black">
        <button aria-label="Keyboard large" className={`${tb} w-[20px]`}><svg width="12" height="14" viewBox="0 0 12 14"><rect width="12" height="14" fill="#101416" /><path d="M1 2.500h10M1 7h10M1 11.500h10" stroke="#e8ecee" strokeWidth="3" /><path d="M1 4.500h6M1 9.500h6" stroke="#101416" strokeWidth="2" /></svg></button>
        <button aria-label="Keyboard small" className={`${tb} w-[20px]`}><svg width="12" height="12" viewBox="0 0 12 12"><rect width="12" height="12" fill="#101416" /><path d="M1 2h10v8H1z" fill="#e8ecee" /><path d="M1 4.500h6M1 7.500h6" stroke="#101416" strokeWidth="2" /></svg></button>
        <button className={`${tb} ${ROBOTO} w-[20px] text-[9px] leading-3 text-[#eceff0]`}>Abc</button>
        <div className="relative flex min-w-0 flex-1 overflow-hidden bg-[#081b27]">
          <svg width="10" height="14" viewBox="0 0 10 14" className="absolute top-px left-0"><path d="M0 1h7L0 7z" fill="#f0b968" /><path d="M2.500 7v5" stroke="#d6dde0" /></svg>
          {[1, 2, 3, 4].map((n) => (
            <span key={n} className={`${MONO} w-[384px] shrink-0 text-[9px] leading-[21px] text-[#c4ced2]`}>{n === 1 ? "" : n}</span>
          ))}
        </div>
      </div>
      <div className="flex min-h-0 flex-1">
        <div className="flex w-[63px] shrink-0 overflow-hidden">
          <ul className="flex w-[57px] flex-col bg-[#4b5257]">
            {SHOWN.map((k, i) => (
              <li key={k} className={`font-['DejaVu_Sans',sans-serif] flex shrink-0 items-end overflow-hidden border-b border-[#5f676c] pl-px text-[9px] leading-[11px] text-[#959ca1] ${i === 0 ? "h-[6px]" : "h-[12px]"}`}>{k}</li>
            ))}
          </ul>
          <ul className="flex w-[6px] flex-col bg-black px-px">
            {SHOWN.map((k, i) => (
              <li key={k} className={`shrink-0 border-b-2 border-black ${k === "C5" ? "bg-[#5a3a3c]" : "bg-[#3a4246]"} ${i === 0 ? "h-[6px]" : "h-[12px]"}`} />
            ))}
          </ul>
        </div>
        <div className="min-w-0 flex-1 overflow-hidden"><NoteGrid /></div>
      </div>
      <div className="flex h-[10px] shrink-0 items-center justify-center border-y border-black bg-[#5f686b] pl-20 shadow-[inset_0_1px_0_#8c9599,inset_0_-1px_0_#8c9599]">
        <svg width="20" height="3" viewBox="0 0 20 3"><path d="M0 1.500h20" stroke="#a4adb0" strokeDasharray="1 2" /></svg>
      </div>
      <div className="flex h-[173px] shrink-0">
        <div className="mr-px w-[62px] shrink-0 bg-[#636a6d] bg-[linear-gradient(180deg,transparent_12px,#717a7d_12px,#717a7d_13px,transparent_13px,transparent_23px,#717a7d_23px,#717a7d_24px,transparent_24px,transparent_33px,#717a7d_33px,#717a7d_34px,transparent_34px)] bg-[size:100%_43px] shadow-[inset_0_1px_0_#858e91]" />
        <div className="min-w-0 flex-1 overflow-hidden"><VelocityGrid /></div>
      </div>
    </section>
  );
}

/* ---------- taskbar ---------- */
function Chrome() {
  return (
    <svg width="15" height="15" viewBox="0 0 16 16" className="shrink-0">
      <circle cx="8" cy="8" r="7.500" fill="#f3c41f" />
      <path d="M8 8L1.500 4.200A7.500 7.500 0 0 1 14.500 4.500H8z" fill="#d93a2b" />
      <path d="M8 8L1.500 4.200A7.500 7.500 0 0 0 7 15.400L11 9.500z" fill="#3fa045" />
      <circle cx="8" cy="8" r="3.400" fill="#fff" />
      <circle cx="8" cy="8" r="2.600" fill="#4a86d8" />
    </svg>
  );
}

function Taskbar() {
  const tasks: { t: string; i: React.ReactNode; on?: boolean }[] = [
    { t: "ICQ - Google Chrome", i: <Chrome /> },
    { t: "Hudební fórum • Ode...", i: <Chrome /> },
    {
      t: "Total Commander 7.0...",
      i: (
        <svg width="15" height="15" viewBox="0 0 15 15" className="shrink-0"><path d="M0 0h15v15H1l-1-1z" fill="#1d2f8f" /><rect x="4" width="8" height="5" fill="#dfe4ef" /><rect x="8" y="1" width="2" height="3" fill="#1d2f8f" /><rect x="2" y="7" width="11" height="7" fill="#fff" /><path d="M2 9.500h11M2 12.500h11" stroke="#c9372c" /></svg>
      ),
    },
    {
      t: "FL Studio 9",
      on: true,
      i: (
        <svg width="15" height="16" viewBox="0 0 15 16" className="shrink-0"><ellipse cx="7.500" cy="8" rx="7" ry="7.500" fill="#1c1a10" /><path d="M2 5l3-3 3 2 4-3 2 3c0 5-3 9-7 11C4 13 2 9 2 5z" fill="#f2c62a" /><path d="M5 4l2 8M9 4v4" stroke="#fff6b8" strokeWidth="1.500" /></svg>
      ),
    },
  ];
  return (
    <footer className="flex h-[30px] shrink-0 bg-[linear-gradient(180deg,#3d7de8_0px,#5a96f2_2px,#2a62dc_5px,#245edb_24px,#1a44a6_30px)]">
      <button className={`${SANS} flex w-[96px] shrink-0 items-center gap-[5px] rounded-r-[12px] bg-[linear-gradient(180deg,#5fae5c_0px,#3f943d_5px,#3a8f38_22px,#2b6f2a_30px)] pl-[11px] text-[18px] leading-6 font-bold text-white italic shadow-[1px_0_3px_#123a90] [text-shadow:1px_1px_2px_#1c4a1b]`}>
        <svg width="17" height="16" viewBox="0 0 17 16" className="shrink-0">
          <path d="M2 2c2-1 4-1 6 0L7 7C5 6 3 6 1 7z" fill="#e8542b" />
          <path d="M9 3c2 1 4 1 7 0l-2 5c-2 1-4 1-6 0z" fill="#7fcf3a" />
          <path d="M1 8c2-1 4-1 6 0l-1 5c-2-1-4-1-6 0z" fill="#5b8df0" />
          <path d="M8 9c2 1 4 1 6 0l-1 5c-2 1-4 1-6 0z" fill="#fccf33" />
        </svg>
        start
      </button>
      <div className="ml-[10px] flex min-w-0 flex-1 gap-px pt-[3px]">
        {tasks.map((t) => (
          <button
            key={t.t}
            className={`${ROBOTO} flex h-[24px] w-[159px] items-center gap-[5px] rounded-[3px] pl-[10px] text-[11px] leading-4 whitespace-nowrap text-white ${
              t.on ? "bg-[#1c4db7] shadow-[inset_1px_1px_2px_#0f2f80]" : "bg-linear-to-b from-[#4b8df8] to-[#3474ea] shadow-[inset_1px_1px_0_#6aa4fb,inset_-1px_-1px_0_#2a5fd0]"
            }`}
          >
            {t.i}
            {t.t}
          </button>
        ))}
      </div>
      <div className="flex w-[49px] shrink-0 items-center border-l border-[#0d3f9e] bg-[linear-gradient(180deg,#3aa5f3_0px,#1391ea_4px,#0f88e0_24px,#0a5fb4_30px)]">
        <button aria-label="Show hidden icons" className="-ml-[10px] h-[18px] w-[18px] shrink-0">
          <svg width="18" height="18" viewBox="0 0 18 18"><circle cx="9" cy="9" r="8.500" fill="#2590e0" stroke="#8fd0fa" /><path d="M11 5L7 9l4 4" fill="none" stroke="#fff" strokeWidth="2" /></svg>
        </button>
        <svg width="18" height="16" viewBox="0 0 18 16" className="ml-px shrink-0" fill="none"><rect x="1" y="3" width="8" height="7" fill="#1a2b66" stroke="#c9d3dd" /><path d="M3 13h6l-1-3H4z" fill="#c9d3dd" /><path d="M11 4v4M13 3c1 2 1 4 0 6M15 1c2 3 2 7 0 10" stroke="#d9d3b8" /></svg>
        <svg width="14" height="14" viewBox="0 0 14 14" className="ml-[3px] shrink-0"><circle cx="7" cy="7" r="6.500" fill="#eef4fb" /><path d="M8 1L4 7h3l-1 6 4-7H7z" fill="#1b62c8" /></svg>
      </div>
    </footer>
  );
}

export default function App() {
  return (
    <main className="flex h-screen flex-col bg-white pb-px pl-[80px]">
      <Toolbar />
      <div className="flex min-h-0 flex-1 bg-[#4c565a]">
        <Browser />
        <div className="w-[6px] shrink-0 bg-[linear-gradient(90deg,#6c767a_0px,#4b5458_2px,#3a4347_6px)]" />
        <PianoRoll />
      </div>
      <Taskbar />
    </main>
  );
}
